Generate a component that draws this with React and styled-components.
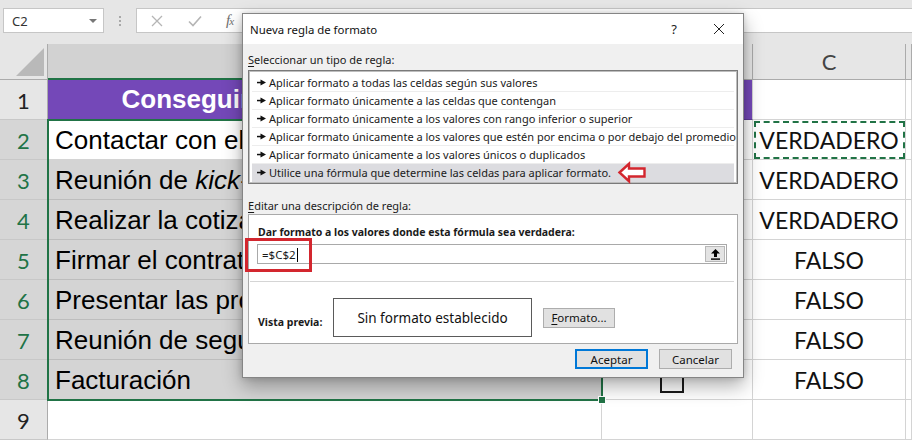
import React from 'react';
import styled, { createGlobalStyle, css } from 'styled-components';

const Global = createGlobalStyle`
  html, body { margin: 0; padding: 0; }
  body {
    width: 912px; height: 440px; overflow: hidden; background: #fff;
    font-family: "Liberation Sans", Arial, sans-serif;
  }
`;

const UI = `"Noto Sans", "Segoe UI", sans-serif`;
const CAL = `Lato, "Open Sans", sans-serif`;
const GREEN = '#217346';

const Page = styled.div`
  position: relative;
  width: 912px;
  height: 440px;
  overflow: hidden;
  display: flex;
  flex-direction: column;
  background: #fff;
`;

/* ---------- toolbar ---------- */
const Toolbar = styled.div`
  height: 44px;
  flex: 0 0 44px;
  box-sizing: border-box;
  background: #e6e6e6;
  display: flex;
  align-items: flex-start;
  padding: 8px 0 0 3px;
`;
const NameBox = styled.div`
  width: 101px;
  height: 25px;
  box-sizing: border-box;
  background: #fff;
  border: 1px solid #c6c6c6;
  display: flex;
  align-items: center;
  justify-content: space-between;
  padding: 0 6px 0 8px;
  font: 13px ${UI};
  color: #333;
`;
const Caret = styled.span`
  width: 0; height: 0;
  border-left: 4px solid transparent;
  border-right: 4px solid transparent;
  border-top: 4px solid #777;
`;
const Grip = styled.div`
  width: 32px;
  height: 25px;
  display: flex;
  flex-direction: column;
  align-items: center;
  justify-content: center;
  gap: 2px;
  i { display: block; width: 2px; height: 2px; background: #a8a8a8; }
`;
const FormulaBar = styled.div`
  flex: 1;
  height: 25px;
  box-sizing: border-box;
  background: #fff;
  border: 1px solid #c6c6c6;
  border-right: none;
  display: flex;
  align-items: center;
  padding-left: 13px;
  gap: 23px;
  color: #b5b5b5;
`;
const Fx = styled.span`
  font: italic 15px "Liberation Serif", serif;
  color: #6e6e6e;
  letter-spacing: -1px;
  small { font-size: 11px; }
`;

/* ---------- sheet ---------- */
const Sheet = styled.div`
  position: relative;
  flex: 1;
  display: grid;
  grid-template-columns: 48px 554px 151px 153px 1fr;
  grid-template-rows: 36px repeat(9, 40px);
`;
const Corner = styled.div`
  background: #e6e6e6;
  border-right: 1px solid #ababab;
  border-bottom: 1px solid #ababab;
  position: relative;
  &::after {
    content: '';
    position: absolute;
    right: 3px; bottom: 3px;
    width: 28px; height: 28px;
    background: #b9b9b9;
    clip-path: polygon(100% 0, 100% 100%, 0 100%);
  }
`;
const ColHead = styled.div`
  box-sizing: border-box;
  background: #e6e6e6;
  border-right: 1px solid #ababab;
  border-bottom: 1px solid #ababab;
  display: flex;
  align-items: center;
  justify-content: center;
  font: 22px ${CAL};
  color: #444;
  ${(p) => p.$selected && css`
    background: #d2d2d2;
    color: ${GREEN};
    border-bottom: 2px solid ${GREEN};
  `}
`;
const RowHead = styled.div`
  box-sizing: border-box;
  background: ${(p) => (p.$selected ? '#d6d6d6' : '#e6e6e6')};
  color: ${(p) => (p.$selected ? GREEN : '#222')};
  border-right: 1px solid #ababab;
  border-bottom: 1px solid #c8c8c8;
  display: flex;
  align-items: center;
  justify-content: center;
  padding-top: 2px;
  font: 22px ${CAL};
`;
const Cell = styled.div`
  box-sizing: border-box;
  border-right: 1px solid #d4d4d4;
  border-bottom: 1px solid #d4d4d4;
  background: #fff;
  display: flex;
  align-items: center;
  min-width: 0;
  overflow: hidden;
  white-space: nowrap;
`;
const TaskCell = styled(Cell)`
  background: ${(p) => (p.$shaded ? '#d4d4d4' : '#fff')};
  border-bottom-color: ${(p) => (p.$shaded ? '#bdbdbd' : '#d4d4d4')};
  border-right-color: ${(p) => (p.$shaded ? '#bdbdbd' : '#d4d4d4')};
  padding: 2px 0 0 7px;
  font: 26px "Liberation Sans", Arial, sans-serif;
  color: #000;
  em { font-style: italic; }
`;
const TitleCell = styled(Cell)`
  background: #7448b8;
  border-right-color: #7448b8;
  border-bottom-color: #5d3a95;
  justify-content: center;
  font: bold 26px "Liberation Sans", Arial, sans-serif;
  color: #fff;
`;
const TitleFill = styled(Cell)`
  background: #7448b8;
  border-bottom-color: #5d3a95;
`;
const CheckCell = styled(Cell)`
  justify-content: center;
  padding: 2px 11px 0 0;
`;
const CheckBox = styled.span`
  display: block;
  width: 24px;
  height: 24px;
  box-sizing: border-box;
  border: 2px solid #1a1a1a;
`;
const BoolCell = styled(Cell)`
  justify-content: center;
  padding-top: 1px;
  font: 23px ${CAL};
  color: #111;
  ${(p) => p.$marked && css`
    outline: 2px dashed ${GREEN};
    outline-offset: -3px;
  `}
`;
const SelectionFrame = styled.div`
  position: absolute;
  grid-column: 2 / 3;
  grid-row: 3 / 10;
  inset: -1px;
  border: 2px solid ${GREEN};
  pointer-events: none;
  z-index: 1;
`;
const Handle = styled.span`
  position: absolute;
  right: -5px;
  bottom: -5px;
  width: 6px;
  height: 6px;
  background: ${GREEN};
  border: 1px solid #fff;
`;

/* ---------- dialog ---------- */
const Dialog = styled.div`
  position: absolute;
  left: 242px;
  top: 13px;
  width: 502px;
  height: 365px;
  box-sizing: border-box;
  border: 1px solid #858585;
  background: #f0f0f0;
  box-shadow: 0 8px 18px rgba(0, 0, 0, 0.32), 0 0 6px rgba(0, 0, 0, 0.15);
  display: flex;
  flex-direction: column;
  font: 11px ${UI};
  color: #1a1a1a;
  z-index: 5;
`;
const TitleBar = styled.div`
  height: 30px;
  flex: 0 0 30px;
  background: #fff;
  display: flex;
  align-items: center;
  padding: 0 12px 0 7px;
  font: 11.4px ${UI};
  color: #111;
`;
const TitleText = styled.span`
  flex: 1;
`;
const TitleBtn = styled.span`
  display: flex;
  align-items: center;
  justify-content: center;
  width: 24px;
  font: 13px ${UI};
  color: #222;
  margin-left: ${(p) => p.$gap || 0}px;
`;
const Body = styled.div`
  flex: 1;
  display: flex;
  flex-direction: column;
  padding: 0 5px;
`;
const Label = styled.div`
  height: 16px;
  line-height: 16px;
  margin-top: ${(p) => p.$top || 0}px;
  u { text-decoration: underline; text-underline-offset: 2px; }
`;
const RuleList = styled.div`
  margin-top: 2px;
  height: 114px;
  box-sizing: border-box;
  border: 1px solid #7a7a7a;
  box-shadow: inset 0 0 0 1px #bdbdbd;
  background: #fff;
  padding: 3px 3px;
  display: flex;
  flex-direction: column;
`;
const RuleItem = styled.div`
  height: 18px;
  flex: 0 0 18px;
  box-sizing: border-box;
  border-bottom: 1px solid ${(p) => (p.$selected ? '#dcdce0' : '#ededed')};
  background: ${(p) => (p.$selected ? '#dcdce0' : 'transparent')};
  display: flex;
  align-items: center;
  gap: 3px;
  padding-left: 5px;
  white-space: nowrap;
  overflow: visible;
`;
const Bullet = styled.svg`
  flex: 0 0 auto;
`;
const Callout = styled.svg`
  flex: 0 0 auto;
  margin: -3px 0 -3px 4px;
  overflow: visible;
`;
const EditBox = styled.div`
  height: 130px;
  box-sizing: border-box;
  border: 1px solid #a9a9a9;
  background: #fff;
  display: flex;
  flex-direction: column;
  padding: 9px 10px 0 8px;
`;
const BoldLabel = styled.div`
  font-weight: bold;
  font-size: 10.5px;
  height: 16px;
  line-height: 16px;
  padding-left: 1px;
`;
const FormulaInput = styled.div`
  margin-top: 4px;
  height: 20px;
  box-sizing: border-box;
  border: 1px solid #a9a9a9;
  display: flex;
  align-items: center;
  justify-content: space-between;
  padding: 0 1px 0 4px;
  font: 11.5px ${UI};
`;
const Caret2 = styled.span`
  display: inline-block;
  width: 1px;
  height: 14px;
  background: #000;
  vertical-align: -3px;
  margin-left: 1px;
`;
const Collapse = styled.span`
  width: 20px;
  height: 16px;
  box-sizing: border-box;
  background: #e3e3e3;
  border: 1px solid #b8b8b8;
  display: flex;
  align-items: center;
  justify-content: center;
`;
const Divider = styled.div`
  height: 1px;
  background: #d5d5d5;
  margin: 17px -7px 0 -7px;
`;
const PreviewRow = styled.div`
  display: flex;
  align-items: center;
  margin-top: 16px;
`;
const PreviewLabel = styled.div`
  font-weight: bold;
  font-size: 10.5px;
  width: 75px;
  padding: 9px 0 0 1px;
`;
const PreviewBox = styled.div`
  width: 199px;
  height: 39px;
  box-sizing: border-box;
  border: 1px solid #5a5a5a;
  display: flex;
  align-items: center;
  justify-content: center;
  font: 13.5px ${UI};
  color: #111;
`;
const Button = styled.div`
  width: ${(p) => p.$w || 73}px;
  height: 20px;
  box-sizing: border-box;
  background: #e1e1e1;
  border: 1px solid #adadad;
  display: flex;
  align-items: center;
  justify-content: center;
  font: 11.5px ${UI};
  color: #111;
  margin-left: ${(p) => p.$ml || 0}px;
  u { text-decoration: underline; text-underline-offset: 2px; }
  ${(p) => p.$default && css`
    border: 2px solid #0078d7;
  `}
`;
const Footer = styled.div`
  display: flex;
  justify-content: flex-end;
  gap: 11px;
  margin-top: 5px;
  padding-right: 6px;
`;
const RedMark = styled.div`
  position: absolute;
  left: 2px;
  top: 224px;
  width: 67px;
  height: 34px;
  box-sizing: border-box;
  border: 3px solid #d3262e;
  pointer-events: none;
`;

const rules = [
  'Aplicar formato a todas las celdas según sus valores',
  'Aplicar formato únicamente a las celdas que contengan',
  'Aplicar formato únicamente a los valores con rango inferior o superior',
  'Aplicar formato únicamente a los valores que estén por encima o por debajo del promedio',
  'Aplicar formato únicamente a los valores únicos o duplicados',
  'Utilice una fórmula que determine las celdas para aplicar formato.',
];

const tasks = [
  ['Contactar con el cliente'],
  ['Reunión de ', 'kick-off'],
  ['Realizar la cotización'],
  ['Firmar el contrato'],
  ['Presentar las propuestas'],
  ['Reunión de seguimiento'],
  ['Facturación'],
];
const bools = ['VERDADERO', 'VERDADERO', 'VERDADERO', 'FALSO', 'FALSO', 'FALSO', 'FALSO'];

const Pointer = () => (
  <Bullet width="9" height="7" viewBox="0 0 9 7">
    <rect x="0" y="2.8" width="5" height="1.5" fill="#111" />
    <polygon points="3.5,0.5 9,3.5 3.5,6.5" fill="#111" />
  </Bullet>
);

export default function App() {
  return (
    <>
      <Global />
      <Page>
        <Toolbar>
          <NameBox>
            <span>C2</span>
            <Caret />
          </NameBox>
          <Grip><i /><i /><i /></Grip>
          <FormulaBar>
            <svg width="14" height="14" viewBox="0 0 14 14">
              <path d="M2 2 L12 12 M12 2 L2 12" stroke="#b5b5b5" strokeWidth="1.3" fill="none" />
            </svg>
            <svg width="16" height="14" viewBox="0 0 16 14">
              <path d="M2 7.5 L6 11.5 L14 2.5" stroke="#b5b5b5" strokeWidth="1.6" fill="none" />
            </svg>
            <Fx>f<small>x</small></Fx>
          </FormulaBar>
        </Toolbar>

        <Sheet>
          <Corner />
          <ColHead $selected>A</ColHead>
          <ColHead>B</ColHead>
          <ColHead>C</ColHead>
          <ColHead />

          <RowHead>1</RowHead>
          <TitleCell>Conseguir un nuevo cliente 2024</TitleCell>
          <TitleFill />
          <Cell />
          <Cell />

          {tasks.map((t, i) => (
            <React.Fragment key={i}>
              <RowHead $selected>{i + 2}</RowHead>
              <TaskCell $shaded={i > 0}>
                <span>
                  {t[0]}
                  {t[1] && <em>{t[1]}</em>}
                </span>
              </TaskCell>
              <CheckCell><CheckBox /></CheckCell>
              <BoolCell $marked={i === 0}>{bools[i]}</BoolCell>
              <Cell />
            </React.Fragment>
          ))}

          <RowHead>9</RowHead>
          <Cell />
          <Cell />
          <Cell />
          <Cell />

          <SelectionFrame>
            <Handle />
          </SelectionFrame>
        </Sheet>

        <Dialog>
          <TitleBar>
            <TitleText>Nueva regla de formato</TitleText>
            <TitleBtn>?</TitleBtn>
            <TitleBtn $gap={21}>
              <svg width="12" height="12" viewBox="0 0 12 12">
                <path d="M1 1 L11 11 M11 1 L1 11" stroke="#222" strokeWidth="1" fill="none" />
              </svg>
            </TitleBtn>
          </TitleBar>
          <Body>
            <Label $top={8}><u>S</u>eleccionar un tipo de regla:</Label>
            <RuleList>
              {rules.map((r, i) => (
                <RuleItem key={i} $selected={i === rules.length - 1}>
                  <Pointer />
                  <span>{r}</span>
                  {i === rules.length - 1 && (
                    <Callout width="28" height="21" viewBox="0 0 28 21">
                      <polygon
                        points="1.5,10.5 11,1.8 11,6.5 26.5,6.5 26.5,14.5 11,14.5 11,19.2"
                        fill="#fff"
                        stroke="#d3262e"
                        strokeWidth="2.4"
                        strokeLinejoin="miter"
                      />
                    </Callout>
                  )}
                </RuleItem>
              ))}
            </RuleList>
            <Label $top={14}><u>E</u>ditar una descripción de regla:</Label>
            <EditBox>
              <BoldLabel>Dar formato a los valores donde esta fórmula sea verdadera:</BoldLabel>
              <FormulaInput>
                <span>=$C$2<Caret2 /></span>
                <Collapse>
                  <svg width="9" height="11" viewBox="0 0 9 11">
                    <polygon points="4.5,0 9,4.5 6,4.5 6,8 3,8 3,4.5 0,4.5" fill="#000" />
                    <rect x="0" y="9.4" width="9" height="1.4" fill="#000" />
                  </svg>
                </Collapse>
              </FormulaInput>
              <Divider />
              <PreviewRow>
                <PreviewLabel>Vista previa:</PreviewLabel>
                <PreviewBox>Sin formato establecido</PreviewBox>
                <Button $w={72} $ml={11}><u>F</u>ormato...</Button>
              </PreviewRow>
            </EditBox>
            <Footer>
              <Button $default>Aceptar</Button>
              <Button>Cancelar</Button>
            </Footer>
          </Body>
          <RedMark />
        </Dialog>
      </Page>
    </>
  );
}
